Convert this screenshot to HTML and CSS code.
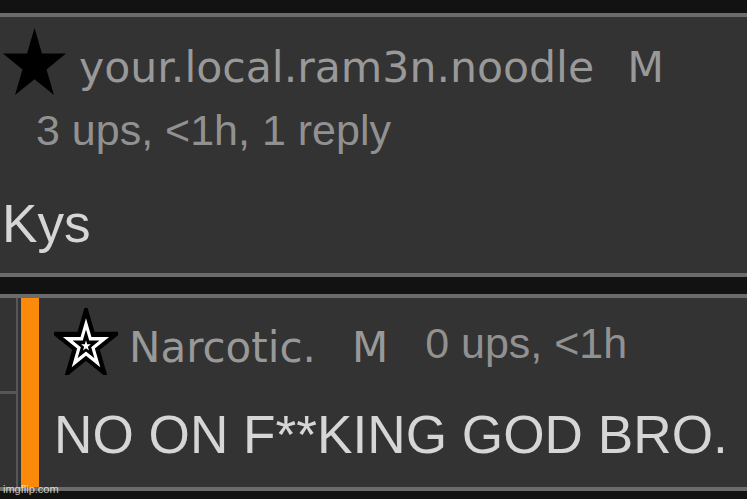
FILE: index.html
```html
<!DOCTYPE html>
<html>
<head>
<meta charset="utf-8">
<link rel="stylesheet" href="styles.css">
</head>
<body>
<div class="page">
  <div class="topgap"></div>
  <section class="card card-main">
    <div class="head">
      <svg class="star star-solid" viewBox="2.45 0 95.1 90.45" preserveAspectRatio="none">
        <polygon points="50,0 61.23,34.55 97.55,34.55 68.17,55.9 79.39,90.45 50,69.1 20.61,90.45 31.83,55.9 2.45,34.55 38.77,34.55" fill="#000"/>
      </svg>
      <span class="name">your.local.ram3n.noodle</span>
      <span class="badge">M</span>
    </div>
    <div class="meta meta-main">3 ups, &lt;1h, 1 reply</div>
    <div class="text text-main">Kys</div>
  </section>
  <div class="gap"></div>
  <section class="card card-reply">
    <div class="indent">
      <div class="indent-cell"></div>
      <div class="indent-cell"></div>
    </div>
    <div class="vline"></div>
    <div class="accent"></div>
    <div class="reply-body">
      <div class="head head-reply">
        <svg class="star star-outline" viewBox="-3 -5 106 100" preserveAspectRatio="none">
          <polygon points="50,0 61.23,34.55 97.55,34.55 68.17,55.9 79.39,90.45 50,69.1 20.61,90.45 31.83,55.9 2.45,34.55 38.77,34.55" fill="#000" stroke="#000" stroke-width="8" stroke-linejoin="miter"/>
          <polygon transform="translate(50 52) scale(0.64) translate(-50 -52)" points="50,0 61.23,34.55 97.55,34.55 68.17,55.9 79.39,90.45 50,69.1 20.61,90.45 31.83,55.9 2.45,34.55 38.77,34.55" fill="#000" stroke="#fff" stroke-width="8" stroke-linejoin="miter"/>
          <polygon transform="translate(50 52) scale(0.17) translate(-50 -52)" points="50,0 61.23,34.55 97.55,34.55 68.17,55.9 79.39,90.45 50,69.1 20.61,90.45 31.83,55.9 2.45,34.55 38.77,34.55" fill="#fff"/>
        </svg>
        <span class="name name-reply">Narcotic.</span>
        <span class="badge badge-reply">M</span>
        <span class="meta meta-reply">0 ups, &lt;1h</span>
      </div>
      <div class="text text-reply">NO ON F**KING GOD BRO.</div>
    </div>
  </section>
  <div class="bottomgap"></div>
  <div class="watermark">imgflip.com</div>
</div>
</body>
</html>
```

FILE: styles.css
```css
html, body {
  margin: 0;
  padding: 0;
  background: #121212;
}
.page {
  position: relative;
  width: 747px;
  height: 499px;
  overflow: hidden;
  background: #121212;
}
.topgap { height: 13px; }
.gap { height: 17px; }
.bottomgap { height: 8px; }

.card {
  background: #333333;
  border-top: 4px solid #6b6b6b;
  border-bottom: 4px solid #6b6b6b;
}
.card-main {
  height: 256px;
  display: flex;
  flex-direction: column;
}
.head {
  display: flex;
  align-items: flex-start;
}
.star { display: block; flex: none; }
.star-solid {
  width: 63px;
  height: 67px;
  margin: 11px 0 0 3px;
}
.name {
  font-family: "DejaVu Sans", sans-serif;
  font-size: 42.6px;
  line-height: 50px;
  color: #999999;
  margin: 25px 0 0 13px;
  white-space: nowrap;
}
.badge {
  font-family: "DejaVu Sans", sans-serif;
  font-size: 42.6px;
  line-height: 50px;
  color: #999999;
  margin: 25px 0 0 33px;
}
.meta {
  font-family: "Liberation Sans", Arial, sans-serif;
  font-size: 43px;
  line-height: 48px;
  color: #919191;
  white-space: nowrap;
}
.meta-main {
  margin: 11px 0 0 36px;
}
.text {
  font-family: "Liberation Sans", Arial, sans-serif;
  font-size: 53.2px;
  line-height: 60px;
  color: #d6d6d6;
  white-space: nowrap;
}
.text-main {
  margin: 40px 0 0 2px;
}

.card-reply {
  height: 189px;
  display: flex;
}
.indent {
  width: 16px;
  display: flex;
  flex-direction: column;
}
.indent-cell {
  flex: 1;
}
.indent-cell + .indent-cell {
  border-top: 3px solid #575757;
}
.vline {
  width: 2px;
  background: #575757;
}
.accent {
  width: 18px;
  margin-left: 3px;
  background: #fb8a0a;
}
.reply-body {
  flex: 1;
  display: flex;
  flex-direction: column;
}
.star-outline {
  width: 64px;
  height: 67px;
  margin: 10px 0 0 15px;
}
.name-reply {
  font-size: 42px;
  margin: 25px 0 0 11px;
}
.badge-reply {
  font-size: 42px;
  margin: 25px 0 0 36px;
}
.meta-reply {
  margin: 21px 0 0 37px;
}
.text-reply {
  margin: 30px 0 0 15px;
}

.watermark {
  position: absolute;
  left: 3px;
  bottom: 3px;
  font-family: "Liberation Sans", Arial, sans-serif;
  font-size: 11px;
  line-height: 13px;
  color: rgba(255, 255, 255, 0.75);
}
```
